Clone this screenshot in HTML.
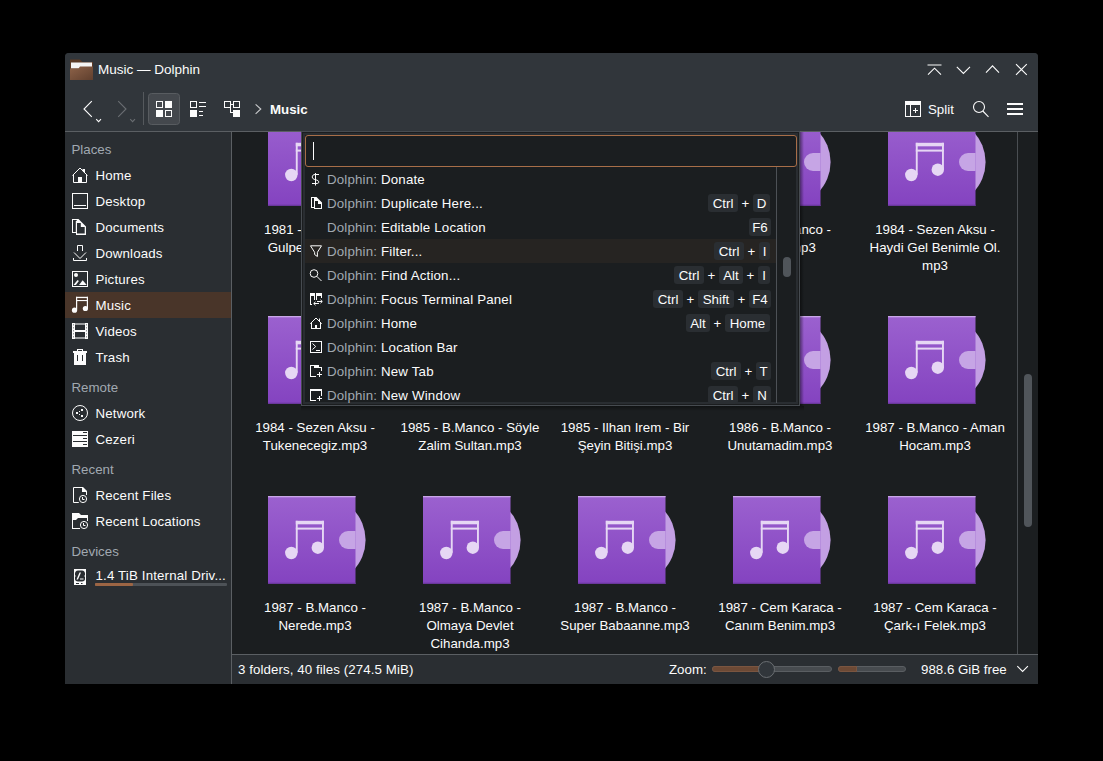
<!DOCTYPE html>
<html><head><meta charset="utf-8">
<style>
*{margin:0;padding:0;box-sizing:border-box}
html,body{width:1103px;height:761px;background:#000;overflow:hidden;font-family:"Liberation Sans",sans-serif;color:#fcfcfc}
.a{position:absolute}
.t{position:absolute;font-size:13.3px;line-height:18px;white-space:nowrap}
.win{position:absolute;left:65px;top:53px;width:973px;height:631px;background:#2a2e32;border-radius:4px 4px 0 0;overflow:hidden}
svg{position:absolute;overflow:visible}
.dim{color:#a1a9b1}
</style></head><body>
<div class="win" id="win"></div>
<!-- header -->
<div class="a" style="left:65px;top:53px;width:973px;height:78px;background:#31363b;border-radius:4px 4px 0 0"></div>
<div class="a" style="left:65px;top:131px;width:973px;height:1px;background:#5b5f63"></div>
<!-- sidebar -->
<div class="a" style="left:65px;top:132px;width:166px;height:552px;background:#2a2e32"></div>
<div class="a" style="left:231px;top:132px;width:1px;height:552px;background:#5b5f63"></div>
<!-- view -->
<div class="a" style="left:232px;top:132px;width:806px;height:522px;background:#1b1e20"></div>
<div class="a" style="left:1017px;top:132px;width:1px;height:522px;background:#4a4e52"></div>
<div class="a" style="left:1024px;top:374px;width:8px;height:153px;background:#50555a;border-radius:4px"></div>
<!-- status -->
<div class="a" style="left:232px;top:654px;width:806px;height:1px;background:#5b5f63"></div>
<div class="a" style="left:232px;top:655px;width:806px;height:29px;background:#2a2e32"></div>

<!-- title -->
<svg style="left:0;top:0" width="1103" height="761" viewBox="0 0 1103 761">
 <defs>
  <linearGradient id="fg" x1="0" y1="0" x2="1" y2="1"><stop offset="0" stop-color="#8d6248"/><stop offset="1" stop-color="#5f3f2e"/></linearGradient>
 </defs>
 <path d="M70 59.5h10l2.5 2.5H93V80H70z" fill="#5a3a26"/>
 <rect x="71" y="62.5" width="21" height="6" fill="#f4f4f4"/>
 <path d="M70 68.5h8.5l1.5-2H93V80H70z" fill="url(#fg)"/>
 <g stroke="#fcfcfc" stroke-width="1.1" fill="none">
  <path d="M927.5 65h14M928 74.6l6.5-6.4 6.5 6.4"/>
  <path d="M956.8 66.8l6.6 6.6 6.6-6.6"/>
  <path d="M986 72.6l6.5-6.8 6.5 6.8"/>
  <path d="M1016 64.2l10.8 10.6M1026.8 64.2l-10.8 10.6"/>
 </g>
 <!-- toolbar -->
 <g stroke="#fcfcfc" stroke-width="1.1" fill="none">
  <path d="M91.8 101.2L84 109l7.8 7.8"/>
  <path d="M96.2 119.2l2.4 2.4 2.4-2.4"/>
 </g>
 <g stroke="#6a6e72" stroke-width="1.1" fill="none">
  <path d="M118.2 101.2L126 109l-7.8 7.8"/>
  <path d="M130.2 119.2l2.4 2.4 2.4-2.4"/>
 </g>
 <path d="M255.6 104.3l5.2 4.7-5.2 4.8" fill="none" stroke="#c8cacc" stroke-width="1.1"/>
 <rect x="143" y="92" width="1" height="33" fill="#55595d"/>
 <rect x="148.5" y="93.5" width="31" height="31" rx="3" fill="#44484d" stroke="#585c60"/>
 <g fill="#fcfcfc">
  <path d="M156 101h7v7h-7zM157 102v5h5v-5z" fill-rule="evenodd"/>
  <rect x="165" y="101" width="7" height="7"/>
  <rect x="156" y="110" width="7" height="7"/>
  <path d="M165 110h7v7h-7zM166 111v5h5v-5z" fill-rule="evenodd"/>
  <path d="M190 101h7v7h-7zM191 102v5h5v-5z" fill-rule="evenodd"/>
  <rect x="199" y="102" width="7" height="1"/><rect x="199" y="106" width="7" height="1"/>
  <rect x="190" y="110" width="7" height="7"/>
  <rect x="199" y="111" width="4" height="1"/><rect x="199" y="115" width="4" height="1"/>
  <path d="M224 101h7v7h-7zM225 102v5h5v-5z" fill-rule="evenodd"/>
  <path d="M233 101h7v7h-7zM234 102v5h5v-5z" fill-rule="evenodd"/>
  <rect x="231" y="104" width="2" height="1"/>
  <rect x="230" y="108" width="1" height="5"/><rect x="230" y="112" width="3" height="1"/>
  <rect x="233" y="110" width="7" height="7"/>
  <!-- split -->
  <path d="M905 101h16v16h-16zM906 105v11h4v-11zM911 105v11h9v-11z" fill-rule="evenodd"/>
  <rect x="913" y="110" width="5" height="1"/><rect x="915" y="108" width="1" height="5"/>
  <rect x="1007" y="103" width="16" height="2"/><rect x="1007" y="108" width="16" height="2"/><rect x="1007" y="113" width="16" height="2"/>
 </g>
 <g stroke="#fcfcfc" stroke-width="1.1" fill="none">
  <circle cx="979" cy="107" r="5.5"/>
  <path d="M982.8 111l5.7 5.8"/>
 </g>
</svg>
<div class="t" style="left:98px;top:61px;font-size:13.5px">Music — Dolphin</div>
<div class="t" style="left:270px;top:100.5px;font-weight:bold">Music</div>
<div class="t" style="left:928px;top:100.5px">Split</div>

<!-- sidebar -->
<div class="a" style="left:65px;top:292px;width:166px;height:26px;background:#493529"></div>
<svg style="left:0;top:0" width="1103" height="761" viewBox="0 0 1103 761">
 <g fill="none" stroke="#fcfcfc" stroke-width="1">
  <!-- home -->
  <path d="M72.5 175.5L80 168l7.5 7.5M73.5 175v7.5h13V175"/>
  <!-- desktop -->
  <rect x="72.5" y="193.5" width="15" height="15"/>
  <path d="M74 205.5h12"/>
  <!-- documents -->
  <!-- downloads -->
  <path d="M77.5 251v-5.5h5v5.5"/>
  <path d="M74 252.5l6 6 6-6"/>
  <path d="M73.5 258v2.5h13v-2.5"/>
  <!-- pictures -->
  <rect x="72.5" y="271.5" width="15" height="15"/>
  <!-- film -->
  <!-- network -->
  <circle cx="80" cy="413" r="7.5"/>
  <!-- recent files -->
  <path d="M78.8 502.5H73.5V487.5H82.5L86.5 491.5V495"/>
  <circle cx="83" cy="499" r="3.6"/>
  <path d="M82.5 497V499.5H84.5"/>
  <!-- recent locations -->
  <circle cx="84" cy="525" r="3.6"/>
  <path d="M83.5 523V525.5H85.5"/>
 </g>
 <g fill="#fcfcfc">
  <path d="M78 177h4v6h-4z"/>
  <path d="M82.5 169h2.5v4.5l-2.5-2.5z"/>
  <path d="M73 236.5"/>
  <path fill-rule="evenodd" d="M72 219H78.5L86 226.5V235H76V233H72ZM73 220V232H75.8V221H76.7V220ZM77 223V233.6H84.7V227H80.8V223Z"/>
  <circle cx="76" cy="275" r="2"/>
  <path d="M79 285L82.7 280.2L86.7 285Z"/><path d="M73.5 285H75.9L78.9 281.1L77.6 280Z"/>
  <!-- music -->
  <rect x="76" y="296.8" width="1.2" height="13"/>
  <rect x="86.8" y="296.8" width="1.2" height="11.5"/>
  <rect x="76" y="296.8" width="12" height="1.3"/>
  <rect x="76" y="300" width="12" height="1.1"/>
  <circle cx="74.5" cy="310.2" r="2.6"/>
  <circle cx="85.4" cy="308.5" r="2.6"/>
  <!-- videos -->
  <path fill-rule="evenodd" d="M72 323h16v16H72zM75 325v5h10v-5zM75 332v5h10v-5z"/>
  <g fill="#9a9c9e"><rect x="75" y="323" width="10" height="2"/><rect x="75" y="337" width="10" height="2"/>
  <rect x="73" y="324" width="1" height="1.5"/><rect x="73" y="327" width="1" height="1.5"/><rect x="73" y="330" width="1" height="1.5"/><rect x="73" y="333" width="1" height="1.5"/><rect x="73" y="336" width="1" height="1.5"/>
  <rect x="86" y="324" width="1" height="1.5"/><rect x="86" y="327" width="1" height="1.5"/><rect x="86" y="330" width="1" height="1.5"/><rect x="86" y="333" width="1" height="1.5"/><rect x="86" y="336" width="1" height="1.5"/></g>
  <!-- trash -->
  <path fill-rule="evenodd" d="M77 349h6v2h4v2h-1v12H74v-12h-1v-2h4zM78 350v1h4v-1zM77 355v6h1v-6zM82 355v6h1v-6z"/>
  <!-- network dots -->
  <rect x="76" y="412" width="2" height="2"/>
  <rect x="81" y="409" width="2" height="2"/>
  <rect x="81" y="415" width="2" height="2"/>
  <rect x="79" y="411" width="1" height="1"/>
  <rect x="79" y="414" width="1" height="1"/>
  <!-- cezeri -->
  <path fill-rule="evenodd" d="M72 431h16v16H72zM83 432v1h4v-1zM73 435v1h14v-1zM83 438v1h4v-1zM73 441v1h14v-1zM83 444v1h4v-1z"/>
  <path d="M82 487H83L87 491V492H82Z"/>
  <path d="M72 513H79L81 515H88V521H87V518H78L76 520H73V528H80V529H72Z"/>
  <!-- drive -->
  <path fill-rule="evenodd" d="M74 569h12v16H74zM78 570.5h4c2 0 3 1.5 3 3v1.5c-0.7 0.5-0.7 1.5 0 2v2c0 1.5-1 2.5-3 2.5h-4c-2 0-3-1-3-2.5v-2c0.7-0.5 0.7-1.5 0-2v-1.5c0-1.5 1-3 3-3zM76 583v1h3v-1zM81 583v1h1.5v-1z"/>
  <path d="M76.5 579.5l3-7h1.5l-3 7z"/>
  <rect x="80" y="578.5" width="3.5" height="1"/>
 </g>
 <rect x="95" y="583" width="132" height="3" rx="1" fill="#4d5257"/>
 <rect x="95" y="583" width="38" height="3" rx="1" fill="#9c6544"/>
</svg>
<div class="t dim" style="left:71.5px;top:140.5px">Places</div>
<div class="t" style="letter-spacing:0.15px;left:95.5px;top:166.5px">Home</div>
<div class="t" style="letter-spacing:0.15px;left:95.5px;top:192.5px">Desktop</div>
<div class="t" style="letter-spacing:0.15px;left:95.5px;top:218.5px">Documents</div>
<div class="t" style="letter-spacing:0.15px;left:95.5px;top:244.5px">Downloads</div>
<div class="t" style="letter-spacing:0.15px;left:95.5px;top:270.5px">Pictures</div>
<div class="t" style="letter-spacing:0.15px;left:95.5px;top:296.5px">Music</div>
<div class="t" style="letter-spacing:0.15px;left:95.5px;top:322.5px">Videos</div>
<div class="t" style="letter-spacing:0.15px;left:95.5px;top:348.5px">Trash</div>
<div class="t dim" style="left:71.5px;top:378.5px">Remote</div>
<div class="t" style="letter-spacing:0.15px;left:95.5px;top:404.5px">Network</div>
<div class="t" style="letter-spacing:0.15px;left:95.5px;top:430.5px">Cezeri</div>
<div class="t dim" style="left:71.5px;top:460.5px">Recent</div>
<div class="t" style="letter-spacing:0.15px;left:95.5px;top:486.5px">Recent Files</div>
<div class="t" style="letter-spacing:0.15px;left:95.5px;top:512.5px">Recent Locations</div>
<div class="t dim" style="left:71.5px;top:542.5px">Devices</div>
<div class="t" style="letter-spacing:0.15px;left:95.5px;top:566.5px">1.4 TiB Internal Driv...</div>

<!-- view grid -->
<div class="a" style="left:232px;top:132px;width:785px;height:522px;overflow:hidden">
<svg style="left:0;top:0" width="785" height="522" viewBox="232 132 785 522">
<defs>
 <linearGradient id="pg" x1="0" y1="0" x2="0" y2="1"><stop offset="0" stop-color="#9b61cf"/><stop offset="1" stop-color="#8443c0"/></linearGradient>
 <g id="mi">
  <circle cx="53.8" cy="44" r="43.8" fill="#c39fe3"/>
  <rect x="0" y="0" width="87.5" height="88" fill="url(#pg)"/>
  <rect x="0" y="0" width="87.5" height="1.3" fill="#c9a6e8"/>
  <rect x="0" y="86.7" width="87.5" height="1.3" fill="#6a389c"/>
  <path d="M80 35h7.5v18h-7.5a9 9 0 0 1 0-18z" fill="#c6a5e5"/>
  <g fill="#e6d7f4">
   <circle cx="23.3" cy="57" r="6.2"/>
   <circle cx="49.8" cy="51.7" r="6.2"/>
   <rect x="27.8" y="24.8" width="1.9" height="32"/>
   <rect x="54" y="24.8" width="1.9" height="27"/>
   <rect x="27.8" y="24.8" width="28.1" height="3.5"/>
   <rect x="27.8" y="31.6" width="28.1" height="2"/>
  </g>
 </g>
</defs>
<use href="#mi" x="268" y="118"/>
<use href="#mi" x="423" y="118"/>
<use href="#mi" x="578" y="118"/>
<use href="#mi" x="733" y="118"/>
<use href="#mi" x="888" y="118"/>
<use href="#mi" x="268" y="316"/>
<use href="#mi" x="423" y="316"/>
<use href="#mi" x="578" y="316"/>
<use href="#mi" x="733" y="316"/>
<use href="#mi" x="888" y="316"/>
<use href="#mi" x="268" y="496"/>
<use href="#mi" x="423" y="496"/>
<use href="#mi" x="578" y="496"/>
<use href="#mi" x="733" y="496"/>
<use href="#mi" x="888" y="496"/>
</svg>
<div class="t" style="left:3px;width:160px;text-align:center;top:88.5px">1981 - B.Manco -</div>
<div class="t" style="left:3px;width:160px;text-align:center;top:106.5px">Gulpembe&nbsp;.mp3</div>
<div class="t" style="left:468px;width:160px;text-align:center;top:88.5px">1986 - B.Manco -</div>
<div class="t" style="left:468px;width:160px;text-align:center;top:106.5px">Hocam.mp3</div>
<div class="t" style="left:623px;width:160px;text-align:center;top:88.5px">1984 - Sezen Aksu -</div>
<div class="t" style="left:623px;width:160px;text-align:center;top:106.5px">Haydi Gel Benimle Ol.</div>
<div class="t" style="left:623px;width:160px;text-align:center;top:124.5px">mp3</div>
<div class="t" style="left:3px;width:160px;text-align:center;top:286.5px">1984 - Sezen Aksu -</div>
<div class="t" style="left:3px;width:160px;text-align:center;top:304.5px">Tukenecegiz.mp3</div>
<div class="t" style="left:158px;width:160px;text-align:center;top:286.5px">1985 - B.Manco - Söyle</div>
<div class="t" style="left:158px;width:160px;text-align:center;top:304.5px">Zalim Sultan.mp3</div>
<div class="t" style="left:313px;width:160px;text-align:center;top:286.5px">1985 - Ilhan Irem - Bir</div>
<div class="t" style="left:313px;width:160px;text-align:center;top:304.5px">Şeyin Bitişi.mp3</div>
<div class="t" style="left:468px;width:160px;text-align:center;top:286.5px">1986 - B.Manco -</div>
<div class="t" style="left:468px;width:160px;text-align:center;top:304.5px">Unutamadim.mp3</div>
<div class="t" style="left:623px;width:160px;text-align:center;top:286.5px">1987 - B.Manco - Aman</div>
<div class="t" style="left:623px;width:160px;text-align:center;top:304.5px">Hocam.mp3</div>
<div class="t" style="left:3px;width:160px;text-align:center;top:466.5px">1987 - B.Manco -</div>
<div class="t" style="left:3px;width:160px;text-align:center;top:484.5px">Nerede.mp3</div>
<div class="t" style="left:158px;width:160px;text-align:center;top:466.5px">1987 - B.Manco -</div>
<div class="t" style="left:158px;width:160px;text-align:center;top:484.5px">Olmaya Devlet</div>
<div class="t" style="left:158px;width:160px;text-align:center;top:502.5px">Cihanda.mp3</div>
<div class="t" style="left:313px;width:160px;text-align:center;top:466.5px">1987 - B.Manco -</div>
<div class="t" style="left:313px;width:160px;text-align:center;top:484.5px">Super Babaanne.mp3</div>
<div class="t" style="left:468px;width:160px;text-align:center;top:466.5px">1987 - Cem Karaca -</div>
<div class="t" style="left:468px;width:160px;text-align:center;top:484.5px">Canım Benim.mp3</div>
<div class="t" style="left:623px;width:160px;text-align:center;top:466.5px">1987 - Cem Karaca -</div>
<div class="t" style="left:623px;width:160px;text-align:center;top:484.5px">Çark-ı Felek.mp3</div>
</div>

<!-- palette -->
<div class="a" style="left:301px;top:131px;width:499px;height:275px;background:#464b50"></div>
<div class="a" style="left:302px;top:132px;width:497px;height:273px;background:#1b1d1f"></div>
<div class="a" style="left:303px;top:133px;width:495px;height:271px;background:#292d31"></div>
<div class="a" style="left:305px;top:135px;width:491px;height:267px;background:#1b1e20"></div>
<div class="a" style="left:800px;top:132px;width:4px;height:274px;background:linear-gradient(90deg,rgba(0,0,0,.45),rgba(0,0,0,0))"></div>
<div class="a" style="left:301px;top:406px;width:503px;height:5px;background:linear-gradient(180deg,rgba(0,0,0,.4),rgba(0,0,0,0))"></div>
<div class="a" style="left:305px;top:135px;width:492px;height:32px;border:1px solid #a86e48;border-radius:3px;background:#1b1e20"></div>
<div class="a" style="left:313px;top:142px;width:1px;height:18px;background:#fcfcfc"></div>
<div class="a" style="left:776px;top:167px;width:1px;height:236px;background:#4d5156"></div>
<div class="a" style="left:305px;top:239px;width:471px;height:24px;background:#262422"></div>
<div class="a" style="left:783px;top:257px;width:8px;height:20px;border-radius:4px;background:#50555a"></div>

<div class="t" style="letter-spacing:0.17px;left:327px;top:170.5px"><span class="dim">Dolphin:</span> Donate</div>
<div class="t" style="letter-spacing:0.17px;left:327px;top:194.5px"><span class="dim">Dolphin:</span> Duplicate Here...</div>
<div class="a" style="left:708px;top:194px;width:30px;height:18px;background:#2a2e32;border-radius:3px"></div>
<div class="t" style="left:708px;top:194.5px;width:30px;text-align:center">Ctrl</div>
<div class="a" style="left:753px;top:194px;width:17px;height:18px;background:#2a2e32;border-radius:3px"></div>
<div class="t" style="left:753px;top:194.5px;width:17px;text-align:center">D</div>
<div class="t" style="left:735.5px;top:194.5px;width:20px;text-align:center">+</div>
<div class="t" style="letter-spacing:0.17px;left:327px;top:218.5px"><span class="dim">Dolphin:</span> Editable Location</div>
<div class="a" style="left:749px;top:218px;width:22px;height:18px;background:#2a2e32;border-radius:3px"></div>
<div class="t" style="left:749px;top:218.5px;width:22px;text-align:center">F6</div>
<div class="t" style="letter-spacing:0.17px;left:327px;top:242.5px"><span class="dim">Dolphin:</span> Filter...</div>
<div class="a" style="left:714px;top:242px;width:30px;height:18px;background:#2a2e32;border-radius:3px"></div>
<div class="t" style="left:714px;top:242.5px;width:30px;text-align:center">Ctrl</div>
<div class="a" style="left:759px;top:242px;width:11px;height:18px;background:#2a2e32;border-radius:3px"></div>
<div class="t" style="left:759px;top:242.5px;width:11px;text-align:center">I</div>
<div class="t" style="left:741.5px;top:242.5px;width:20px;text-align:center">+</div>
<div class="t" style="letter-spacing:0.17px;left:327px;top:266.5px"><span class="dim">Dolphin:</span> Find Action...</div>
<div class="a" style="left:674px;top:266px;width:30px;height:18px;background:#2a2e32;border-radius:3px"></div>
<div class="t" style="left:674px;top:266.5px;width:30px;text-align:center">Ctrl</div>
<div class="a" style="left:719px;top:266px;width:24px;height:18px;background:#2a2e32;border-radius:3px"></div>
<div class="t" style="left:719px;top:266.5px;width:24px;text-align:center">Alt</div>
<div class="t" style="left:701.5px;top:266.5px;width:20px;text-align:center">+</div>
<div class="a" style="left:758px;top:266px;width:12px;height:18px;background:#2a2e32;border-radius:3px"></div>
<div class="t" style="left:758px;top:266.5px;width:12px;text-align:center">I</div>
<div class="t" style="left:740.5px;top:266.5px;width:20px;text-align:center">+</div>
<div class="t" style="letter-spacing:0.17px;left:327px;top:290.5px"><span class="dim">Dolphin:</span> Focus Terminal Panel</div>
<div class="a" style="left:653px;top:290px;width:30px;height:18px;background:#2a2e32;border-radius:3px"></div>
<div class="t" style="left:653px;top:290.5px;width:30px;text-align:center">Ctrl</div>
<div class="a" style="left:698px;top:290px;width:36px;height:18px;background:#2a2e32;border-radius:3px"></div>
<div class="t" style="left:698px;top:290.5px;width:36px;text-align:center">Shift</div>
<div class="t" style="left:680.5px;top:290.5px;width:20px;text-align:center">+</div>
<div class="a" style="left:749px;top:290px;width:22px;height:18px;background:#2a2e32;border-radius:3px"></div>
<div class="t" style="left:749px;top:290.5px;width:22px;text-align:center">F4</div>
<div class="t" style="left:731.5px;top:290.5px;width:20px;text-align:center">+</div>
<div class="t" style="letter-spacing:0.17px;left:327px;top:314.5px"><span class="dim">Dolphin:</span> Home</div>
<div class="a" style="left:686px;top:314px;width:24px;height:18px;background:#2a2e32;border-radius:3px"></div>
<div class="t" style="left:686px;top:314.5px;width:24px;text-align:center">Alt</div>
<div class="a" style="left:725px;top:314px;width:45px;height:18px;background:#2a2e32;border-radius:3px"></div>
<div class="t" style="left:725px;top:314.5px;width:45px;text-align:center">Home</div>
<div class="t" style="left:707.5px;top:314.5px;width:20px;text-align:center">+</div>
<div class="t" style="letter-spacing:0.17px;left:327px;top:338.5px"><span class="dim">Dolphin:</span> Location Bar</div>
<div class="t" style="letter-spacing:0.17px;left:327px;top:362.5px"><span class="dim">Dolphin:</span> New Tab</div>
<div class="a" style="left:711px;top:362px;width:30px;height:18px;background:#2a2e32;border-radius:3px"></div>
<div class="t" style="left:711px;top:362.5px;width:30px;text-align:center">Ctrl</div>
<div class="a" style="left:756px;top:362px;width:15px;height:18px;background:#2a2e32;border-radius:3px"></div>
<div class="t" style="left:756px;top:362.5px;width:15px;text-align:center">T</div>
<div class="t" style="left:738.5px;top:362.5px;width:20px;text-align:center">+</div>
<div class="t" style="letter-spacing:0.17px;left:327px;top:386.5px"><span class="dim">Dolphin:</span> New Window</div>
<div class="a" style="left:708px;top:386px;width:30px;height:18px;background:#2a2e32;border-radius:3px"></div>
<div class="t" style="left:708px;top:386.5px;width:30px;text-align:center">Ctrl</div>
<div class="a" style="left:753px;top:386px;width:18px;height:18px;background:#2a2e32;border-radius:3px"></div>
<div class="t" style="left:753px;top:386.5px;width:18px;text-align:center">N</div>
<div class="t" style="left:735.5px;top:386.5px;width:20px;text-align:center">+</div>
<svg style="left:0;top:0" width="1103" height="761" viewBox="0 0 1103 761">
 <g fill="none" stroke="#fcfcfc" stroke-width="1">
  <path d="M319 174.5H315.5C313.2 174.5 312.3 175.4 312.3 176.9C312.3 178.6 313.4 179.2 315.5 179.7C317.7 180.3 318.8 180.9 318.8 182C318.8 183.1 317.9 183.5 316 183.5H312M315.5 173V185.5"/>
  <path d="M310.5 245.8H321.5L317.4 252.3V256.5L314.6 254.5V252.3Z" stroke-linejoin="round"/>
  <circle cx="314" cy="273.5" r="3.8"/>
  <path d="M316.8 276.3l4.7 4.7"/>
  <path d="M310.3 323.7L316 318l5.7 5.7"/>
  <path d="M312.5 343.5l3.2 3-3.2 3"/>
  <path d="M317 301.5h5M320.5 299.8l1.8 1.7-1.8 1.7M319 303.5h-5M315.5 301.8l-1.8 1.7 1.8 1.7"/>
 </g>
 <g fill="#fcfcfc">
  <path fill-rule="evenodd" d="M311 197H316.5L322 202.5V209H314V208H311ZM312 198V207H314V198ZM315 201H318V204H321V208H315Z"/>
  <path d="M310 293h5v3h-4v9h-1zM314 296h1v4h-1zM310 304h2v1h-2zM316 293h6v5h-1v-2h-4v4h-1z"/>
  <path d="M311 323h1v6h-1zM320 323h1v6h-1zM311 328h10v1h-10zM315 325h2v3h-2zM319 318.5h1v2.5h-1z"/>
  <path fill-rule="evenodd" d="M310 341h12v12h-12zM311 342v10h10v-10z"/>
  <rect x="316" y="350" width="4" height="1"/>
  <path d="M310 365h4v1h-3v10h5v1h-6z M314 365h5v2h3v4h-1v-3h-7z"/>
  <rect x="317" y="374" width="5" height="1"/><rect x="319" y="372" width="1" height="5"/>
  <path d="M310 389h12v7h-1v-5h-10v9h5v1h-6z"/>
  <rect x="317" y="398" width="5" height="1"/><rect x="319" y="396" width="1" height="5"/>
 </g>
</svg>


<!-- status bar -->
<div class="t" style="left:238px;top:660.5px;letter-spacing:0.08px">3 folders, 40 files (274.5 MiB)</div>
<div class="t" style="left:669px;top:660.5px">Zoom:</div>
<div class="a" style="left:712px;top:666px;width:120px;height:6px;border-radius:3px;background:#474b4f;border:1px solid #5a5e62"></div>
<div class="a" style="left:712px;top:666px;width:56px;height:6px;border-radius:3px 0 0 3px;background:#6c4935;border:1px solid #7a5540"></div>
<div class="a" style="left:757.5px;top:660.5px;width:17px;height:17px;border-radius:50%;background:#31363b;border:1px solid #6a6e72"></div>
<div class="a" style="left:838px;top:666px;width:68px;height:6px;border-radius:3px;background:#474b4f;border:1px solid #5a5e62"></div>
<div class="a" style="left:838px;top:666px;width:19px;height:6px;border-radius:3px 0 0 3px;background:#6c4935;border:1px solid #7a5540"></div>
<div class="t" style="left:921px;top:660.5px">988.6 GiB free</div>
<svg style="left:0;top:0" width="1103" height="761" viewBox="0 0 1103 761"><path d="M1017.3 666.2l5.3 5.3 5.3-5.3" fill="none" stroke="#fcfcfc" stroke-width="1.1"/></svg>

</body></html>
